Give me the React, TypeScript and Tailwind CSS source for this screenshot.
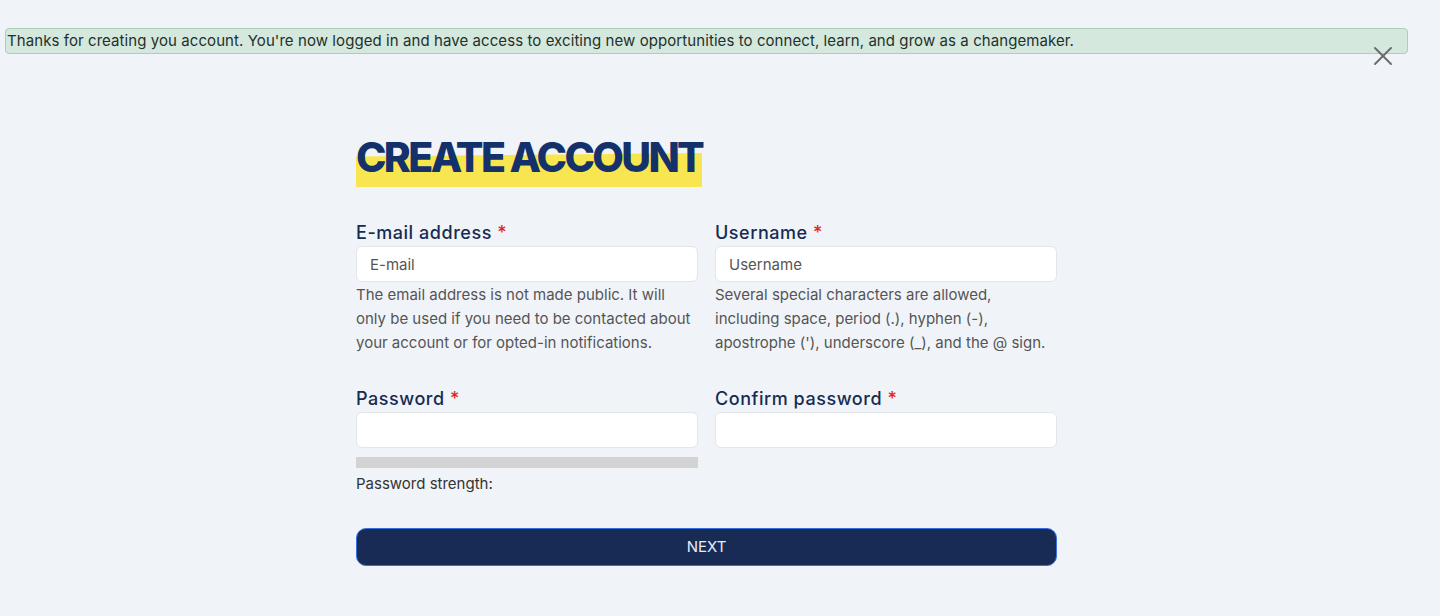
import { X } from "lucide-react";

function Label({ text }: { text: string }) {
  return (
    <label className="block text-[18px] leading-[24px] font-medium tracking-[0.03em] text-[#172b52] mb-[1px]">
      {text} <span className="text-[#e0261b]">*</span>
    </label>
  );
}

function Input({ placeholder }: { placeholder?: string }) {
  return (
    <input
      placeholder={placeholder}
      className="block w-full h-[36px] rounded-[6px] border border-[#e2e5ea] bg-white px-[13px] text-[15px] text-[#333] placeholder:text-[#555] outline-none"
    />
  );
}

export default function App() {
  return (
    <div className="min-h-[616px] bg-[#f0f4f9] font-['Inter',sans-serif] pt-[28px]">
      <div className="relative ml-[5px] mr-[32px]">
        <div className="h-[26px] rounded-[4px] border border-[#a8cfb8] bg-[#d4e8de] px-[1px] text-[15px] leading-[24px] tracking-[0.005em] text-[#24302a]">
          Thanks for creating you account. You're now logged in and have access to exciting new opportunities to connect, learn, and grow as a changemaker.
        </div>
        <button className="absolute right-[9px] top-[12px] text-[#6b6b6b]">
          <X size={32} strokeWidth={1.4} />
        </button>
      </div>

      <div className="ml-[356px] w-[701px] pt-[78px]">
        <h1 className="relative inline-block">
          <span className="absolute left-0 right-0 top-[21px] h-[34px] bg-[#f8e650] [clip-path:polygon(0_10%,100%_0,100%_100%,0_100%)]" />
          <span className="relative text-[41px] leading-[50px] font-extrabold tracking-[-0.065em] text-[#15316a]">
            CREATE ACCOUNT
          </span>
        </h1>

        <div className="grid grid-cols-2 gap-x-[17px] mt-[39px]">
          <div>
            <Label text="E-mail address" />
            <Input placeholder="E-mail" />
            <p className="mt-[1px] text-[15px] leading-[24px] text-[#555]">
              The email address is not made public. It will only be used if you need to be contacted about your account or for opted-in notifications.
            </p>
          </div>
          <div>
            <Label text="Username" />
            <Input placeholder="Username" />
            <p className="mt-[1px] text-[15px] leading-[24px] text-[#555]">
              Several special characters are allowed, including space, period (.), hyphen (-), apostrophe ('), underscore (_), and the @ sign.
            </p>
          </div>

          <div className="mt-[32px]">
            <Label text="Password" />
            <Input />
            <div className="mt-[9px] h-[11px] bg-[#d3d3d3]" />
            <p className="mt-[4px] text-[15px] leading-[24px] text-[#333]">Password strength:</p>
          </div>
          <div className="mt-[32px]">
            <Label text="Confirm password" />
            <Input />
          </div>
        </div>

        <button className="mt-[32px] flex h-[38px] w-full items-center justify-center rounded-[10px] border border-[#3a6fe0] bg-[#182b55] text-[15px] text-[#e8ecf5]">
          NEXT
        </button>
      </div>
    </div>
  );
}
